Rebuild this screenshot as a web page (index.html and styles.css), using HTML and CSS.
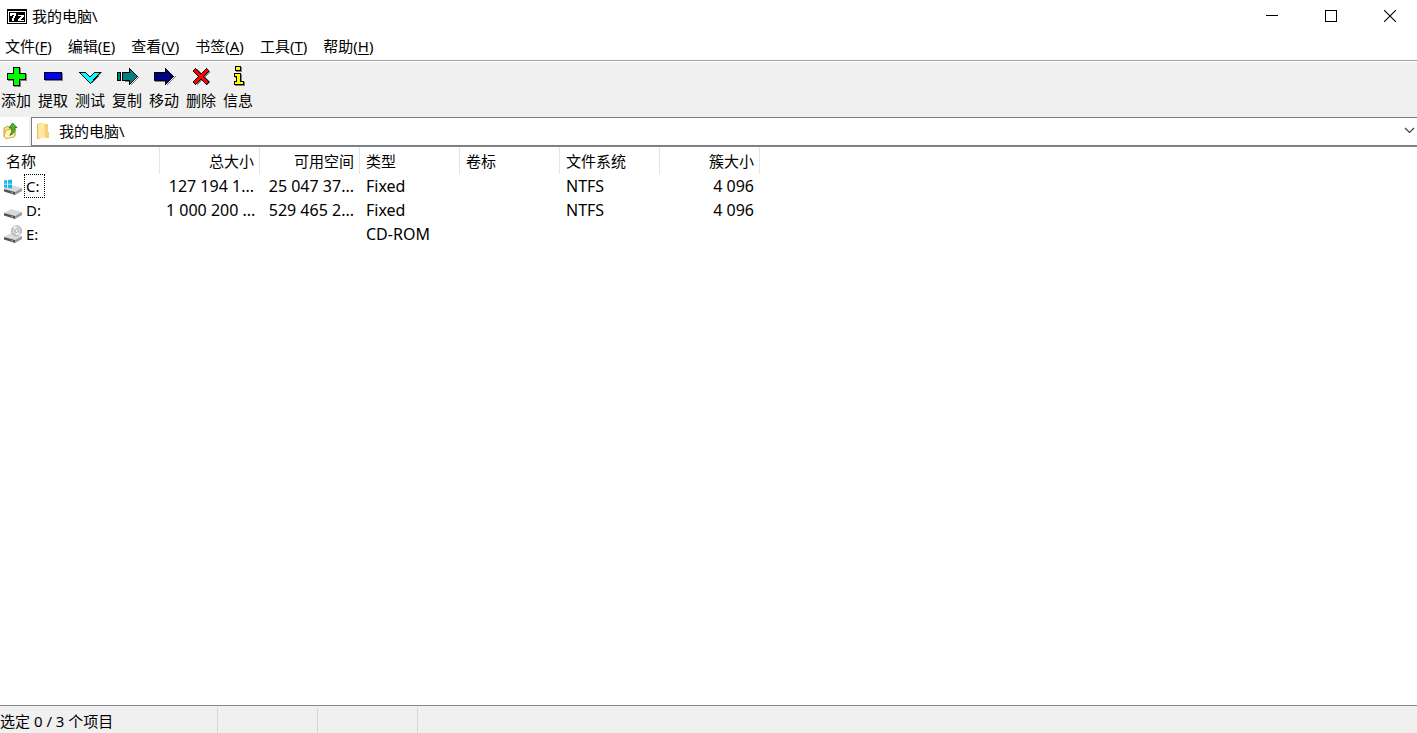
FILE: index.html
```html
<!DOCTYPE html>
<html lang="zh-CN">
<head>
<meta charset="utf-8">
<title>我的电脑\</title>
<link rel="stylesheet" href="styles.css">
</head>
<body>
<header class="titlebar">
  <svg class="app-icon" width="20" height="15" viewBox="0 0 20 15" shape-rendering="crispEdges" aria-hidden="true">
    <path fill="#000" d="M0 0h20v15H0z"/><path fill="#fff" d="M1 2h18v12H1z"/><path fill="#000" d="M2 3h16v10H2z"/>
    <path fill="#fff" d="M3 4h6v3h-1v2h-1v3h-2v-3h1v-2h1v-1h-2v1h-2zM11 6h6v2h-1v1h-1v1h-1v1h3v1h-6v-2h1v-1h1v-1h1v-1h-3z"/>
  </svg>
  <h1 class="title">我的电脑\</h1>
  <div class="window-buttons">
    <button class="window-button" type="button" aria-label="最小化"><svg width="12" height="12" shape-rendering="crispEdges"><path d="M0 5h12v1H0z"/></svg></button>
    <button class="window-button" type="button" aria-label="最大化"><svg width="12" height="12" shape-rendering="crispEdges"><path fill="none" stroke="#000" d="M.5.5h11v11H.5z"/></svg></button>
    <button class="window-button" type="button" aria-label="关闭"><svg width="12" height="12"><path fill="none" stroke="#000" stroke-width="1.1" d="M0 0l12 12M12 0L0 12"/></svg></button>
  </div>
</header>
<nav class="menubar">
  <button class="menu" type="button">文件(<u>F</u>)</button>
  <button class="menu" type="button">编辑(<u>E</u>)</button>
  <button class="menu" type="button">查看(<u>V</u>)</button>
  <button class="menu" type="button">书签(<u>A</u>)</button>
  <button class="menu" type="button">工具(<u>T</u>)</button>
  <button class="menu" type="button">帮助(<u>H</u>)</button>
</nav>
<div class="toolbar">
  <button class="tool" type="button"><svg width="24" height="24" viewBox="0 0 24 24" shape-rendering="crispEdges">
    <path fill="#808080" d="M10 4h7v6h6v7h-6v6h-7v-6H4v-7h6z"/><path d="M9 3h7v6h6v7h-6v6H9v-6H3V9h6z"/><path fill="#0f0" d="M10 4h5v6h6v5h-6v6h-5v-6H4v-5h6z"/></svg>添加</button>
  <button class="tool" type="button"><svg width="24" height="24" viewBox="0 0 24 24" shape-rendering="crispEdges">
    <path fill="#808080" d="M4 9h18v8H4z"/><path d="M3 8h18v8H3z"/><path fill="#00f" d="M4 9h16v6H4z"/></svg>提取</button>
  <button class="tool" type="button"><svg width="24" height="24" viewBox="0 0 24 24" shape-rendering="crispEdges">
    <path fill="none" stroke="#808080" d="M23.5 8.5l-10 11"/><path fill="#0ff" stroke="#000" d="M1.500 8.500h6l4.500 4.500 4.500-4.500h6L12.500 19.500z"/></svg>测试</button>
  <button class="tool" type="button"><svg width="24" height="24" viewBox="0 0 24 24" shape-rendering="crispEdges">
    <path fill="none" stroke="#808080" d="M15.500 21.500l8-8M10 17.500h5"/><path fill="#008080" stroke="#000" d="M2.500 8.500h3v8h-3zM7.500 8.500h7v-4l8 8-8 8v-4h-7z"/></svg>复制</button>
  <button class="tool" type="button"><svg width="24" height="24" viewBox="0 0 24 24" shape-rendering="crispEdges">
    <path fill="none" stroke="#808080" d="M14.500 21.500l9-9M3 17.500h10"/><path fill="#000080" stroke="#000" d="M2.500 8.500h11v-4l8 8-8 8v-4h-11z"/></svg>移动</button>
  <button class="tool" type="button"><svg width="24" height="24" viewBox="0 0 24 24" shape-rendering="crispEdges">
    <path fill="#808080" d="M8 5l5 5 5-5 3 3-5 5 5 5-3 3-5-5-5 5-3-3 5-5-5-5z"/><path fill="#f00" stroke="#000" d="M6.500 4.500l5.500 5.500 5.500-5.500 2.500 2.500-5.500 5.500 5.500 5.500-2.500 2.500-5.500-5.500-5.500 5.500-2.500-2.500 5.500-5.500-5.500-5.500z"/></svg>删除</button>
  <button class="tool" type="button"><svg width="24" height="24" viewBox="0 0 24 24" shape-rendering="crispEdges">
    <path fill="#808080" d="M10 3h6v5h-6zM9 10h7v8h3v4H9v-4h2v-4H9z"/><path d="M9 2h6v5H9zM8 9h7v8h3v4H8v-4h2v-4H8z"/><path fill="#ff0" d="M10 3h4v3h-4zM9 10h5v8h3v2H9v-2h2v-6H9z"/></svg>信息</button>
</div>
<div class="addressbar">
  <button class="up" type="button" aria-label="向上一级"><svg width="16" height="18" viewBox="0 0 16 18">
    <path fill="#fbe38b" stroke="#c8a43b" d="M1 6l4-2 2 2 5-1v9l-9 2-2-2z"/><path fill="#fff3b8" stroke="#d3b04a" d="M1 15l2-7 10-1-2 8-8 1.500z"/>
    <path fill="#4eb928" stroke="#16750f" stroke-width=".8" d="M9.500 1L14 5.500h-2.200c.4 4-1 6.500-5 7.800C8.500 11 9 9 8.800 6H6z"/></svg></button>
  <label class="location">
    <svg width="12" height="16" viewBox="0 0 12 16"><path fill="#e9bd57" d="M0 1h3v15H0z"/><path fill="#ffdf8c" d="M1 0h7v14l-7 2z"/><path fill="#f7d073" d="M8 1h3v8h1v6H8z"/><path fill="#ffe7a7" d="M2 1l5-1v14l-5 1z"/></svg>
    <select class="path" aria-label="路径"><option>我的电脑\</option></select>
    <svg class="chevron" width="11" height="7" viewBox="0 0 11 7"><path fill="none" stroke="#404040" stroke-width="1.200" d="M1 1l4.500 4.500L10 1"/></svg>
  </label>
</div>
<main class="files">
  <table class="list">
    <colgroup><col class="wide"><col><col><col><col><col><col></colgroup>
    <thead><tr><th>名称</th><th class="num">总大小</th><th class="num">可用空间</th><th>类型</th><th>卷标</th><th>文件系统</th><th class="num">簇大小</th></tr></thead>
    <tbody>
      <tr><td class="name"><div class="drive"><svg width="18" height="20" viewBox="0 0 18 20"><path fill="#d9d9d9" d="M0 13l7-4 11 3-7 4z"/><path fill="#555" d="M0 13l11 3v3L0 15.500z"/><path fill="#999" d="M11 16l7-4v3l-7 4z"/><path fill="#45e645" d="M7 16l2 .6v1l-2-.6z"/><path fill="#18b5ee" d="M0 4.500l3-.5v3.700H0zM4 3.900L8 3.500v4.200H4zM0 8.500h3v3.500L0 11.500zM4 8.500h4v4L4 12z"/></svg><span class="label focused">C:</span></div></td><td class="num">127 194 1...</td><td class="num">25 047 37...</td><td>Fixed</td><td></td><td>NTFS</td><td class="num">4 096</td></tr>
      <tr><td class="name"><div class="drive"><svg width="18" height="20" viewBox="0 0 18 20"><path fill="#d9d9d9" d="M0 13l7-4 11 3-7 4z"/><path fill="#555" d="M0 13l11 3v3L0 15.500z"/><path fill="#999" d="M11 16l7-4v3l-7 4z"/><path fill="#45e645" d="M7 16l2 .6v1l-2-.6z"/></svg><span class="label">D:</span></div></td><td class="num">1 000 200 ...</td><td class="num">529 465 2...</td><td>Fixed</td><td></td><td>NTFS</td><td class="num">4 096</td></tr>
      <tr><td class="name"><div class="drive"><svg width="18" height="20" viewBox="0 0 18 20"><path fill="#d9d9d9" d="M0 13l7-4 11 3-7 4z"/><path fill="#555" d="M0 13l11 3v3L0 15.500z"/><path fill="#999" d="M11 16l7-4v3l-7 4z"/><path fill="#45e645" d="M7 16l2 .6v1l-2-.6z"/><circle cx="12.500" cy="6.800" r="5" fill="#d0d2d4" stroke="#999" stroke-width=".8"/><path fill="#f3f3f3" d="M12.500 6.800L9 3.300A5 5 0 0 1 12.500 2zM12.500 6.800l3.500 3.500a5 5 0 0 1-3.500 1z"/><circle cx="12.500" cy="6.800" r="1.600" fill="#fff" stroke="#999" stroke-width=".8"/></svg><span class="label">E:</span></div></td><td></td><td></td><td>CD-ROM</td><td></td><td></td><td></td></tr>
    </tbody>
  </table>
</main>
<footer class="statusbar">
  <div class="status first">选定 0 / 3 个项目</div>
  <div class="status"></div>
  <div class="status"></div>
</footer>
</body>
</html>
```
FILE: styles.css
```css
* { box-sizing: border-box; }
body {
  margin: 0;
  min-height: 100vh;
  display: flex;
  flex-direction: column;
  background: #fff;
  color: #000;
  font: 15px/20px "Noto Sans", "Noto Sans CJK SC", sans-serif;
}
button, select {
  font: inherit;
  color: inherit;
  background: none;
  border: 0;
  padding: 0;
  margin: 0;
}
svg { display: block; flex: none; }
.titlebar { display: flex; align-items: center; height: 32px; padding-left: 7px; gap: 5px; }
.title { flex: 1; margin: 0; font-size: 15px; font-weight: 400; }
.window-buttons { display: flex; gap: 5px; }
.window-button { width: 54px; height: 32px; display: grid; place-items: center; }
.menubar { display: flex; align-items: center; gap: 16px; height: 28px; padding: 0 5px; }
.menu { white-space: nowrap; }
.menu u { text-underline-offset: 2px; }
.toolbar {
  display: flex;
  gap: 7px;
  height: 57px;
  padding: 3px 1px 0;
  background: #f0f0f0;
  border-top: 1px solid #a0a0a0;
  box-shadow: inset 0 1px #fff;
}
.tool { display: flex; flex-direction: column; align-items: center; width: 30px; height: 46px; white-space: nowrap; }
.tool svg { margin-bottom: 2px; }
.addressbar { display: flex; height: 29px; background: #f0f0f0; }
.up { width: 29px; padding: 0 0 2px 3px; background: #fff; margin-right: 2px; }
.location {
  flex: 1;
  display: flex;
  align-items: center;
  padding: 0 2px 2px 5px;
  gap: 10px;
  border: 1px solid #7a7a7a;
  border-right: 0;
  background: #fff;
}
.path { flex: 1; appearance: none; }
.files { flex: 1; border-top: 1px solid #828790; border-bottom: 1px solid #828790; }
.list { width: 760px; table-layout: fixed; border-collapse: collapse; }
.list col { width: 100px; }
.list .wide { width: 160px; }
.list th, .list td { padding: 0 6px; font-weight: 400; text-align: left; white-space: nowrap; }
.list th { height: 27px; padding-top: 1px; background: linear-gradient(#e5e5e5, #e5e5e5) right / 1px 100% no-repeat; }
.list td { height: 24px; font-size: 16px; }
.list .num { text-align: right; }
.list .name { padding: 0 4px; font-size: 15px; }
.drive { display: flex; align-items: center; }
.label { height: 24px; padding: 1px 4px 1px 1px; border: 1px solid transparent; margin-left: 2px; }
.focused { border: 1px dotted #000; }
.statusbar { display: flex; height: 27px; background: #f0f0f0; padding-top: 2px; }
.status { width: 100px; border-right: 1px solid #d7d7d7; padding-top: 3px; white-space: nowrap; }
.first { width: 218px; }
```
